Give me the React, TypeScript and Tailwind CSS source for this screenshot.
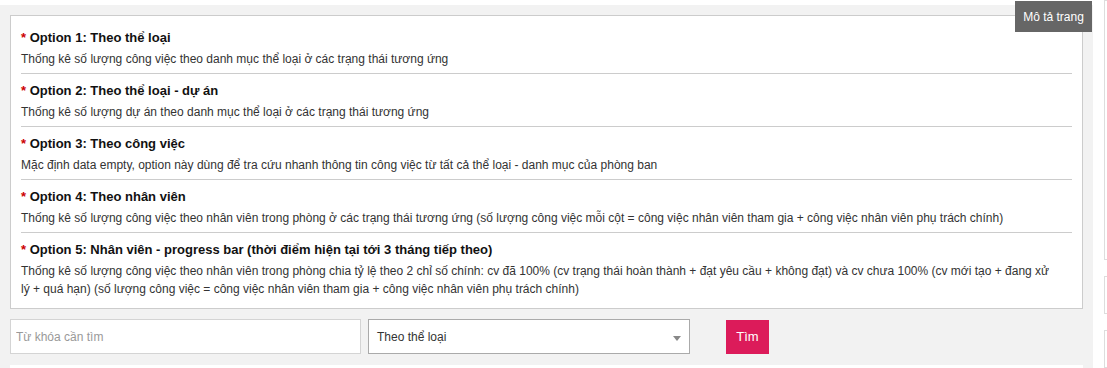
import React from "react";

type OptionItem = {
    title: string;
    description: React.ReactNode;
};

const options: OptionItem[] = [
    {
        title: "Option 1: Theo thể loại",
        description: "Thống kê số lượng công việc theo danh mục thể loại ở các trạng thái tương ứng",
    },
    {
        title: "Option 2: Theo thể loại - dự án",
        description: "Thống kê số lượng dự án theo danh mục thể loại ở các trạng thái tương ứng",
    },
    {
        title: "Option 3: Theo công việc",
        description:
            "Mặc định data empty, option này dùng để tra cứu nhanh thông tin công việc từ tất cả thể loại - danh mục của phòng ban",
    },
    {
        title: "Option 4: Theo nhân viên",
        description:
            "Thống kê số lượng công việc theo nhân viên trong phòng ở các trạng thái tương ứng (số lượng công việc mỗi cột = công việc nhân viên tham gia + công việc nhân viên phụ trách chính)",
    },
    {
        title: "Option 5: Nhân viên - progress bar (thời điểm hiện tại tới 3 tháng tiếp theo)",
        description: (
            <>
                Thống kê số lượng công việc theo nhân viên trong phòng chia tỷ lệ theo 2 chỉ số chính: cv đã 100% (cv
                trạng thái hoàn thành + đạt yêu cầu + không đạt) và cv chưa 100% (cv mới tạo + đang xử
                <br />
                lý + quá hạn) (số lượng công việc = công việc nhân viên tham gia + công việc nhân viên phụ trách chính)
            </>
        ),
    },
];

export default function App() {
    return (
        <div className="flex w-[1107px] h-[368px] overflow-hidden bg-white font-['Liberation_Sans',Arial,sans-serif] text-[12px] text-[#333]">
            {/* Main column */}
            <div className="relative w-[1093px] shrink-0 pt-[5px]">
                <div className="bg-[#f2f2f2] px-[10px] pt-[10px] h-full">
                    <div className="border border-[#ccc] bg-white px-[10px] py-[5px]">
                        {options.map((option, index) => (
                            <div
                                key={option.title}
                                className={`pt-[7px] pb-[5px] ${index < options.length - 1 ? "border-b border-[#ccc]" : ""}`}
                            >
                                <p className="font-bold leading-[20px] text-[13px] text-[#111]">
                                    <span className="text-[#c00]">*</span> {option.title}
                                </p>
                                <p className="mt-[2px] leading-[18px] text-[#333]">{option.description}</p>
                            </div>
                        ))}
                    </div>

                    {/* Search row */}
                    <div className="flex items-start mt-[10px]">
                        <input
                            type="text"
                            placeholder="Từ khóa cần tìm"
                            className="w-[351px] h-[35px] border border-[#d4d4d4] bg-white px-[5px] text-[12px] placeholder:text-[#999] outline-none"
                        />
                        <div className="relative ml-[7px] w-[322px] h-[35px] border border-[#aaa] bg-white flex items-center pl-[8px] text-[#333]">
                            <span>Theo thể loại</span>
                            <span className="absolute right-[8px] top-[16px] w-0 h-0 border-l-[4px] border-r-[4px] border-t-[5px] border-l-transparent border-r-transparent border-t-[#888]" />
                        </div>
                        <button
                            type="button"
                            className="ml-[36px] mt-[1px] w-[43px] h-[34px] bg-[#dc1b5a] text-white text-[13px]"
                        >
                            Tìm
                        </button>
                    </div>

                    <div className="mt-[11px] h-[20px] bg-white" />
                </div>

                <div className="absolute top-[1px] right-[1px] w-[77px] h-[31px] bg-[#666] text-white text-[12px] flex items-center justify-center">
                    Mô tả trang
                </div>
            </div>

            {/* Side column, partially visible */}
            <div className="flex-1 pl-[11px] flex flex-col gap-[16px]">
                <div className="h-[273px] border border-[#ddd] border-r-0" />
                <div className="h-[39px] border border-[#ddd] border-r-0" />
                <div className="h-[40px] border border-[#ddd] border-r-0" />
            </div>
        </div>
    );
}
